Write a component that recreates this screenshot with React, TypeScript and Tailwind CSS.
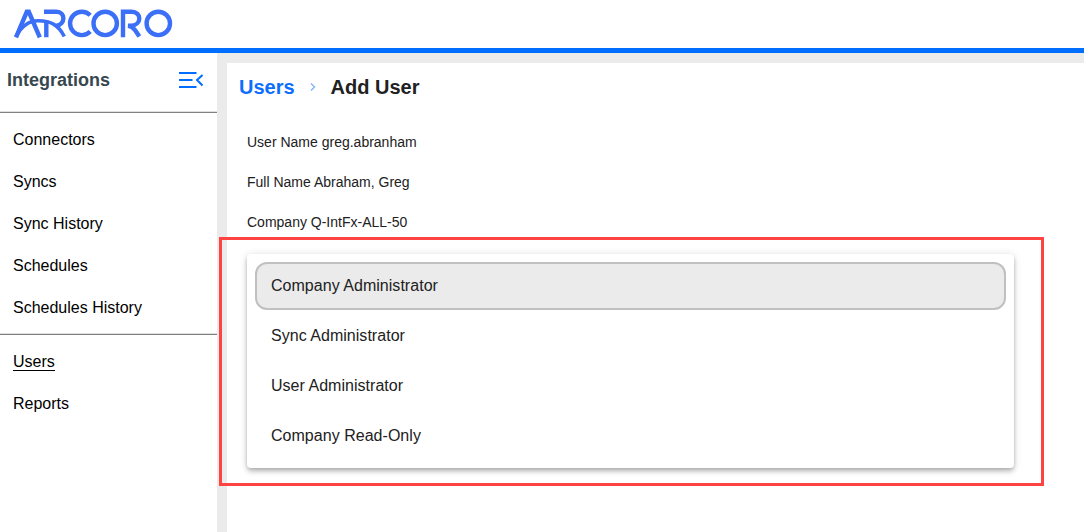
const nav = ["Connectors", "Syncs", "Sync History", "Schedules", "Schedules History"];
const roles = ["Company Administrator", "Sync Administrator", "User Administrator", "Company Read-Only"];

function Logo() {
  return (
    <svg width="162" height="32" viewBox="12 7 162 32" fill="none" stroke="#3b6ff8" strokeWidth="4.4" aria-label="Arcoro">
      <path d="M16 37.3L26.8 11.8H28.8L39.8 37.3" />
      <path d="M16 36.5C22 25.5 29 20.8 38 20.8C51 20.8 58.5 25 64.3 36.5" strokeWidth="3.6" />
      <path d="M46.3 37.3V20M44 11.8H56.5C65.5 11.8 66 24.5 56 26" />
      <path d="M90.2 15.3A11.7 11.7 0 1 0 90.2 31.5" />
      <circle cx="105.2" cy="23.4" r="11.7" />
      <path d="M123 37.3V11.8H131.5C142 11.8 142 25 131 25.8L128 25.8C133.5 26.5 136 31 139.3 36.5" />
      <circle cx="158.3" cy="23.4" r="11.7" />
    </svg>
  );
}

function Divider() {
  return <div className="h-0.5 shrink-0 border-t border-b border-t-[#dedede] border-b-[#808080]" />;
}

export default function App() {
  return (
    <div className="relative flex h-[532px] w-[1084px] flex-col overflow-hidden bg-white font-['Liberation_Sans',Arial,sans-serif] text-black">
      <header className="h-[53px] shrink-0 border-b-[5px] border-[#006eff] pt-[7px] pl-3">
        <Logo />
      </header>
      <div className="flex min-h-0 flex-1">
        <aside className="flex w-[217px] shrink-0 flex-col">
          <div className="flex h-[58px] shrink-0 items-start justify-between pt-[13px] pr-[14px] pl-[7px]">
            <h2 className="text-lg leading-7 font-bold text-[#37474f]">Integrations</h2>
            <svg className="mt-[6px]" width="24" height="16" viewBox="0 0 24 16" fill="none" stroke="#006eff" strokeWidth="2">
              <path d="M0 1H17.5M0 8H13.5M0 15H17.5M23.5 3L18 8L23.5 13.5" />
            </svg>
          </div>
          <Divider />
          <nav className="flex h-[220px] shrink-0 flex-col pt-[6px] pl-[13px]">
            {nav.map((n) => (
              <a key={n} className="h-[42px] leading-[42px]">{n}</a>
            ))}
          </nav>
          <Divider />
          <nav className="flex flex-col pt-[6px] pl-[13px]">
            <a className="flex h-[42px] items-center">
              <span className="border-b border-black leading-[17px]">Users</span>
            </a>
            <a className="h-[42px] leading-[42px]">Reports</a>
          </nav>
        </aside>
        <div className="flex flex-1 bg-[#ebebeb] pt-[10px] pl-[10px]">
          <main className="flex-1 bg-white">
            <div className="flex h-12 items-center pl-3 text-xl font-bold text-[#212121]">
              <span className="text-[#0d6efd]">Users</span>
              <svg className="mr-[15px] ml-[15px]" width="6" height="8" viewBox="0 0 6 8" fill="none" stroke="#7fb0ff" strokeWidth="1.3">
                <path d="M1 0.5L4.5 4L1 7.5" />
              </svg>
              <span>Add User</span>
            </div>
            <div className="pt-[11px] pl-5 text-sm leading-10 text-[#212121]">
              <p>User Name greg.abranham</p>
              <p>Full Name Abraham, Greg</p>
              <p>Company Q-IntFx-ALL-50</p>
            </div>
            <ul className="mt-3 ml-5 flex h-[214px] w-[767px] flex-col gap-0.5 rounded bg-white p-2 tracking-[0.03px] text-[#212121] shadow-[0_2px_4px_-1px_rgba(0,0,0,0.2),0_4px_5px_rgba(0,0,0,0.14),0_1px_10px_rgba(0,0,0,0.12)]">
              {roles.map((r, i) => (
                <li
                  key={r}
                  className={
                    i === 0
                      ? "flex h-12 items-center rounded-xl border-2 border-[#c0c0c0] bg-[#ebebeb] px-[14px]"
                      : "flex h-12 items-center px-4"
                  }
                >
                  {r}
                </li>
              ))}
            </ul>
          </main>
        </div>
      </div>
      <div className="pointer-events-none absolute top-[237px] left-[219px] h-[249px] w-[825px] border-3 border-[#ff4242]" />
    </div>
  );
}
